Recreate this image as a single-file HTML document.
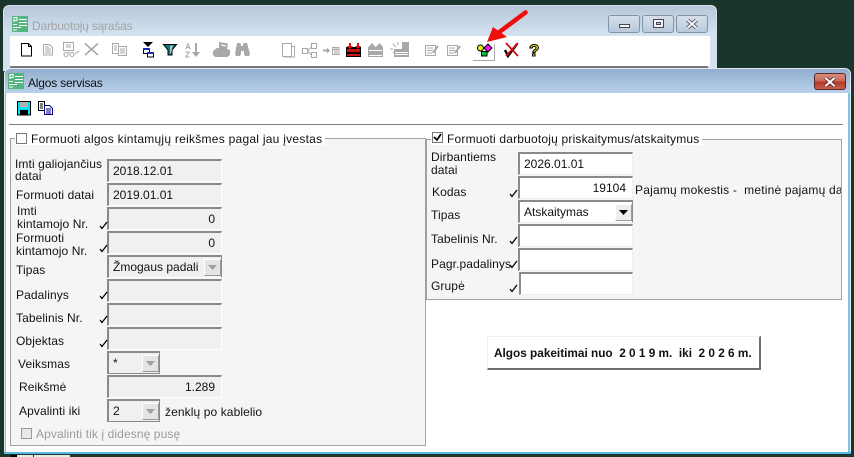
<!DOCTYPE html>
<html><head><meta charset="utf-8">
<style>
html,body{margin:0;padding:0}
body{width:854px;height:457px;position:relative;overflow:hidden;background:#1a352c;font:12px/14px "Liberation Sans",Arial,sans-serif;color:#111}
div,span,svg{position:absolute;box-sizing:border-box}
.t{white-space:nowrap;line-height:14px;letter-spacing:.1px}
.f{border-top:2px solid #8a8a8a;border-left:2px solid #8a8a8a;border-right:1px solid #fff;border-bottom:1px solid #fff;background:#f0f0f0;padding:3px 4px;white-space:nowrap;overflow:hidden;line-height:14px}
.w{background:#fff;border-right:1px solid #eee;border-bottom:1px solid #eee}
.r{text-align:right;padding-right:6px}
.b{width:17px;height:17px;background:#e4e4e4;border:1px solid #fff;border-right-color:#999;border-bottom-color:#999}
.g{border:1px solid #a0a0a0}
.wb{border:1px solid #7f93ab;border-radius:3px;background:linear-gradient(#d6e0ec,#b9c9dc)}
</style></head><body>

<!-- back window -->
<div style="left:3px;top:5px;width:714px;height:66px;border:1px solid #d8e0e8;border-radius:6px 6px 0 0;background:linear-gradient(#b6c7d9,#d5e3f1 30px)"></div>
<div style="left:10px;top:36px;width:700px;height:30px;background:#fff"></div>
<div style="left:10px;top:66px;width:698px;height:2px;background:#777"></div>
<svg style="left:12px;top:16px" width="16" height="16"><rect width="16" height="16" fill="#55b47f"/><path d="M2 1.500h3v3H2zM2 1v5" stroke="#fff" fill="none"/><path d="M1 8.500h4M1 11.500h8M1 14h4M7 3.500h8M7 6.500h8M7 9.500h8" stroke="#fff"/></svg>
<span class="t" style="left:32px;top:19px;color:#a3a3a3;font-size:12px;letter-spacing:-.2px">Darbuotojų sąrašas</span>
<div class="wb" style="left:608px;top:15px;width:32px;height:18px"><div style="left:10px;top:8px;width:11px;height:4px;background:#f4f6f8;border:1px solid #445"></div></div>
<div class="wb" style="left:642px;top:15px;width:32px;height:18px"><div style="left:10px;top:3px;width:11px;height:9px;background:#f4f6f8;border:1px solid #445"></div><div style="left:13px;top:6px;width:5px;height:3px;background:#bccbdc;border:1px solid #445"></div></div>
<div class="wb" style="left:676px;top:15px;width:32px;height:18px"><svg style="left:9px;top:3px" width="12" height="10"><path d="M1.500 1l9 8M10.500 1l-9 8" stroke="#445" stroke-width="3.600"/><path d="M1.500 1l9 8M10.500 1l-9 8" stroke="#f4f6f8" stroke-width="2"/></svg></div>

<!-- toolbar icons back -->
<svg style="left:0;top:36px" width="720" height="30" fill="none">
<path d="M21.500 7.500h7l3 3v9.500h-10zM28.500 7.500v3h3" fill="#fff" stroke="#000"/>
<g stroke="#a8a8a8"><path d="M43.500 8.500h6l3 3v7.500h-9zM45 11h4M45 13h6M45 15h6M45 17h6"/>
<path d="M63.500 6.500h10v8h-10zM66 9h5M66 11h5M69 14.500v3" /><circle cx="66" cy="18.500" r="2"/><circle cx="72" cy="18.500" r="2"/><path d="M75 18l4-3"/>
<path d="M85 7.500l13 11.500M98 7.500l-13 11.500" stroke-width="1.600"/>
<path d="M112.500 7.500h6v10h-6zM118.500 10.500h8v9h-8zM114 10h3M114 12h3M114 14h3M120 13h5M120 15h5M120 17h5"/></g>
<path d="M143 6h10l-5 5z" fill="#000"/><path d="M143.500 12.500h6v5h-6z" fill="#fff" stroke="#000"/><path d="M143 12h7v2h-7z" fill="#1a2fb0"/><path d="M147.500 16.500h6v4.500h-6z" fill="#fff" stroke="#000"/><path d="M147 16h7v2h-7z" fill="#1a2fb0"/>
<path d="M163.500 8.500h13l-4.500 5.500v5h-4v-5z" fill="#0b7a80" stroke="#000"/><path d="M170 9.500h3l-2 8h-1z" fill="#a9c0c2"/>
<text x="185" y="13.500" font-size="8" font-family="Liberation Sans" font-weight="bold" fill="#a8a8a8">A</text><text x="185" y="21.500" font-size="8" font-family="Liberation Sans" font-weight="bold" fill="#a8a8a8">Z</text>
<path d="M195 7h2v9h3l-4 5-4-5h3z" fill="#a8a8a8"/>
<g fill="#a8a8a8"><path d="M219 6l9 1.500-1 5.500 3 1v5l-3 2h-12l-2-2v-4l4-3h2z"/>
<path d="M237 7h3.500l.5 3h2l.5-3h3.500l3 11-1 2h-4l-1-2v-3h-3v3l-1 2h-4l-1-2z"/></g>
<path d="M221 9l5 1" stroke="#fff"/>
<g stroke="#a8a8a8"><path d="M282.500 7.500h9v13h-9zM291.500 10.500h3v10.500h-9.500v-.5"/>
<path d="M302.500 12.500h5v5h-5zM311.500 7.500h5v5h-5zM311.500 16.500h5v5h-5zM307.500 15l4-4M307.500 15l4 4"/>
<path d="M332.500 11.500h6.500v7h-6.500zM332.500 13.500h6.500M335 11.500v7M337 11.500v7"/></g>
<path d="M323 13.500h4v-2l3 3-3 3v-2h-4z" fill="#a8a8a8"/>
<path d="M346 11h15v10h-15z" fill="#000"/><path d="M347 13h13v3h-13zM347 18h13v2h-13z" fill="#c91414"/><path d="M349 7h2v3h2l-3 3-3-3h2zM357 7h2v3h2l-3 3-3-3h2z" fill="#e01010"/>
<g fill="#a8a8a8"><path d="M368 11h15v10h-15zM372 7l3.500 4h-7zM379.500 7l3.500 4h-7z"/><path d="M394 13h15v8h-15zM402 6h7v7h-7z"/></g>
<path d="M369 19.500h13M369 14.500h13M395 16.500h13M395 18.500h13" stroke="#fff"/>
<path d="M393 8l3 3M398 6v3M390 13h3M393 17l2-2" stroke="#a8a8a8"/>
<g stroke="#a8a8a8"><path d="M425.500 9.500h10v10h-10z"/><path d="M427 12h6M427 14.500h6M427 17h5"/><path d="M433 17l5-7" stroke-width="2"/>
<path d="M447.500 9.500h10v10h-10z"/><path d="M449 12h6M449 14.500h6M449 17h5"/><path d="M455 17l5-7" stroke-width="2"/></g>
<path d="M473 24.500h21.500V8" stroke="#a8a8a8"/>
<circle cx="480.500" cy="12" r="3" fill="#f0f000" stroke="#000"/><path d="M488 8l4 4-4 4-4-4z" fill="#f010f0" stroke="#000"/><path d="M481.500 15.500h5.500v4.500h-5.500z" fill="#00c040" stroke="#000"/>
<path d="M505 14l3 6 9-12" stroke="#000" stroke-width="2.400"/><path d="M506 7l12 13M518 7l-12 13" stroke="#d01010" stroke-width="1.800"/>
<text x="529" y="20" font-size="17" font-weight="bold" font-family="Liberation Sans" fill="#f4f000" stroke="#000" stroke-width="1">?</text>
</svg>
<svg style="left:0;top:0" width="720" height="68"><path d="M525.500 12.500L498 33" stroke="#f20d0d" stroke-width="4.500" stroke-linecap="round"/><path d="M487 42l6-15 14 10z" fill="#f20d0d"/></svg>

<!-- front window -->
<div style="left:4px;top:68px;width:847px;height:386px;border:1px solid #e4e9ef;border-radius:6px 6px 0 0;background:#7fc4e6"></div>
<div style="left:5px;top:69px;width:845px;height:24px;background:linear-gradient(#92aecd,#b9d1ea);border-radius:5px 5px 0 0"></div>
<div style="left:6px;top:93px;width:842px;height:359px;background:#fff"></div>
<div style="left:4px;top:452px;width:847px;height:2px;background:#5ab8de"></div>
<svg style="left:8px;top:73px" width="16" height="16"><rect width="16" height="16" fill="#55b47f"/><path d="M2 1.500h3v3H2zM2 1v5" stroke="#fff" fill="none"/><path d="M1 8.500h4M1 11.500h8M1 14h4M7 3.500h8M7 6.500h8M7 9.500h8" stroke="#fff"/></svg>
<span class="t" style="left:28px;top:76px;font-size:12px;letter-spacing:-.2px">Algos servisas</span>
<div style="left:814px;top:73px;width:32px;height:17px;border:1px solid #5a2a2a;border-radius:3px;background:linear-gradient(#d98e7e 0,#c9695a 45%,#b23a2a 55%,#c8604e)"><svg style="left:9px;top:3px" width="12" height="10"><path d="M1.500 1l9 8M10.500 1l-9 8" stroke="#502020" stroke-width="3.600"/><path d="M1.500 1l9 8M10.500 1l-9 8" stroke="#fff" stroke-width="2"/></svg></div>

<svg style="left:17px;top:101px" width="15" height="15"><path d="M.5.500h13v13.500H.5z" fill="#00e0f0" stroke="#000"/><path d="M3 1h8v5H3z" fill="#b0b0b0"/><path d="M3 9h8v5H3z" fill="#000"/></svg>
<svg style="left:38px;top:101px" width="16" height="14"><path d="M.5.500h6v9h-6z" fill="#fff" stroke="#000"/><path d="M2 3h3M2 5h3M2 7h3" stroke="#000"/><path d="M6.500 4.500h5l3 3v6h-8z" fill="#fff" stroke="#000080"/><path d="M8 8h5M8 10h5M8 12h5" stroke="#000080"/></svg>
<div style="left:9px;top:124px;width:834px;height:1px;background:#808080"></div>

<!-- left group -->
<div class="g" style="left:10px;top:138px;width:416px;height:308px;background:#f4f6f5"></div>
<div style="left:15px;top:132px;width:310px;height:13px;background:#fff"></div>
<div style="left:16px;top:133px;width:11px;height:11px;background:#fff;border:1px solid #777"></div>
<span class="t" style="left:31px;top:132px;letter-spacing:.26px">Formuoti algos kintamųjų reikšmes pagal jau įvestas</span>

<span class="t" style="left:15px;top:158px;line-height:12px">Imti galiojančius<br>datai</span>
<span class="t" style="left:16px;top:188px">Formuoti datai</span>
<span class="t" style="left:17px;top:205px;line-height:13px">Imti<br>kintamojo Nr.</span>
<span class="t" style="left:16px;top:232px;line-height:13px">Formuoti<br>kintamojo Nr.</span>
<span class="t" style="left:16px;top:263px">Tipas</span>
<span class="t" style="left:16px;top:288px">Padalinys</span>
<span class="t" style="left:16px;top:311px">Tabelinis Nr.</span>
<span class="t" style="left:16px;top:334px">Objektas</span>
<span class="t" style="left:18px;top:357px">Veiksmas</span>
<span class="t" style="left:19px;top:380px">Reikšmė</span>
<span class="t" style="left:19px;top:404px">Apvalinti iki</span>
<span class="t" style="left:165px;top:405px">ženklų po kablelio</span>

<div class="f" style="left:107px;top:159px;width:115px;height:23px">2018.12.01</div>
<div class="f" style="left:107px;top:183px;width:115px;height:23px">2019.01.01</div>
<div class="f r" style="left:107px;top:207px;width:115px;height:23px">0</div>
<div class="f r" style="left:107px;top:231px;width:115px;height:23px">0</div>
<div class="f" style="left:107px;top:255px;width:115px;height:23px;padding-right:18px;border-right:1px solid #8a8a8a">Žmogaus padali</div>
<div class="b" style="left:204px;top:259px"><svg style="left:3px;top:5px" width="9" height="5"><path d="M0 0h9l-4.500 5z" fill="#a0a0a0"/></svg></div>
<div class="f" style="left:107px;top:279px;width:115px;height:23px"></div>
<div class="f" style="left:107px;top:303px;width:115px;height:23px"></div>
<div class="f" style="left:107px;top:327px;width:115px;height:23px"></div>
<div class="f" style="left:107px;top:351px;width:53px;height:23px;border-right:1px solid #8a8a8a;border-bottom:1px solid #8a8a8a">*</div>
<div class="b" style="left:142px;top:355px"><svg style="left:3px;top:5px" width="9" height="5"><path d="M0 0h9l-4.500 5z" fill="#a0a0a0"/></svg></div>
<div class="f r" style="left:107px;top:375px;width:115px;height:23px">1.289</div>
<div class="f" style="left:107px;top:399px;width:53px;height:23px;border-right:1px solid #8a8a8a;border-bottom:1px solid #8a8a8a">2</div>
<div class="b" style="left:142px;top:403px"><svg style="left:3px;top:5px" width="9" height="5"><path d="M0 0h9l-4.500 5z" fill="#a0a0a0"/></svg></div>
<div style="left:21px;top:428px;width:11px;height:11px;background:#e8e8e8;border:1px solid #999"></div>
<span class="t" style="left:36px;top:427px;color:#9a9a9a">Apvalinti tik į didesnę pusę</span>

<!-- right group -->
<div class="g" style="left:426px;top:139px;width:416px;height:161px;background:#f4f6f5"></div>
<div style="left:431px;top:132px;width:271px;height:13px;background:#fff"></div>
<div style="left:432px;top:132px;width:11px;height:11px;background:#fff;border:1px solid #777"><svg style="left:0;top:0" width="9" height="9"><path d="M1 4l3 3 4-6" stroke="#000" stroke-width="1.800" fill="none"/></svg></div>
<span class="t" style="left:447px;top:132px;letter-spacing:.19px">Formuoti darbuotojų priskaitymus/atskaitymus</span>

<span class="t" style="left:431px;top:151px;line-height:13px">Dirbantiems<br>datai</span>
<span class="t" style="left:432px;top:185px">Kodas</span>
<span class="t" style="left:431px;top:208px">Tipas</span>
<span class="t" style="left:431px;top:232px">Tabelinis Nr.</span>
<span class="t" style="left:431px;top:257px">Pagr.padalinys</span>
<span class="t" style="left:431px;top:279px">Grupė</span>

<div class="f w" style="left:518px;top:152px;width:115px;height:23px">2026.01.01</div>
<div class="f w r" style="left:518px;top:176px;width:115px;height:23px">19104</div>
<div class="f w" style="left:518px;top:200px;width:115px;height:23px;border-right:1px solid #8a8a8a">Atskaitymas</div>
<div class="b" style="left:615px;top:204px;background:#eee"><svg style="left:3px;top:5px" width="9" height="5"><path d="M0 0h9l-4.500 5z" fill="#000"/></svg></div>
<div class="f w" style="left:518px;top:224px;width:115px;height:23px"></div>
<div class="f w" style="left:518px;top:248px;width:115px;height:23px"></div>
<div class="f w" style="left:519px;top:272px;width:114px;height:23px"></div>
<div class="t" style="left:635px;top:183px;width:206px;overflow:hidden;letter-spacing:.2px">Pajamų mokestis -&nbsp; metinė pajamų dar</div>

<!-- checks -->
<svg style="left:0;top:0" width="530" height="360" fill="none" stroke="#000" stroke-width="1.300">
<path d="M100 226l2 2.500 5-6.500M100 249l2 2.500 5-6.500M100 296l2 2.500 5-6.500M100 320l2 2.500 5-6.500M100 344l2 2.500 5-6.500M510 194l2 2.500 5-6.500M510 241l2 2.500 5-6.500M510 265l2 2.500 5-6.500M510 289l2 2.500 5-6.500"/>
</svg>

<!-- button -->
<div style="left:487px;top:336px;width:274px;height:34px;background:#fff;border:1px solid #eee;border-right:2px solid #707070;border-bottom:2px solid #707070"></div>
<span class="t" style="left:494px;top:346px;font-weight:bold;font-size:11.800px;letter-spacing:0">Algos pakeitimai nuo&nbsp; 2 0 1 9 m.&nbsp; iki&nbsp; 2 0 2 6 m.</span>

<!-- bottom strip -->
<div style="left:11px;top:455px;width:6px;height:2px;background:#000"></div>
<div style="left:17px;top:455px;width:16px;height:2px;background:#e8e8e8"></div>
<div style="left:34px;top:455px;width:36px;height:2px;background:#e8e8e8"></div>
</body></html>
